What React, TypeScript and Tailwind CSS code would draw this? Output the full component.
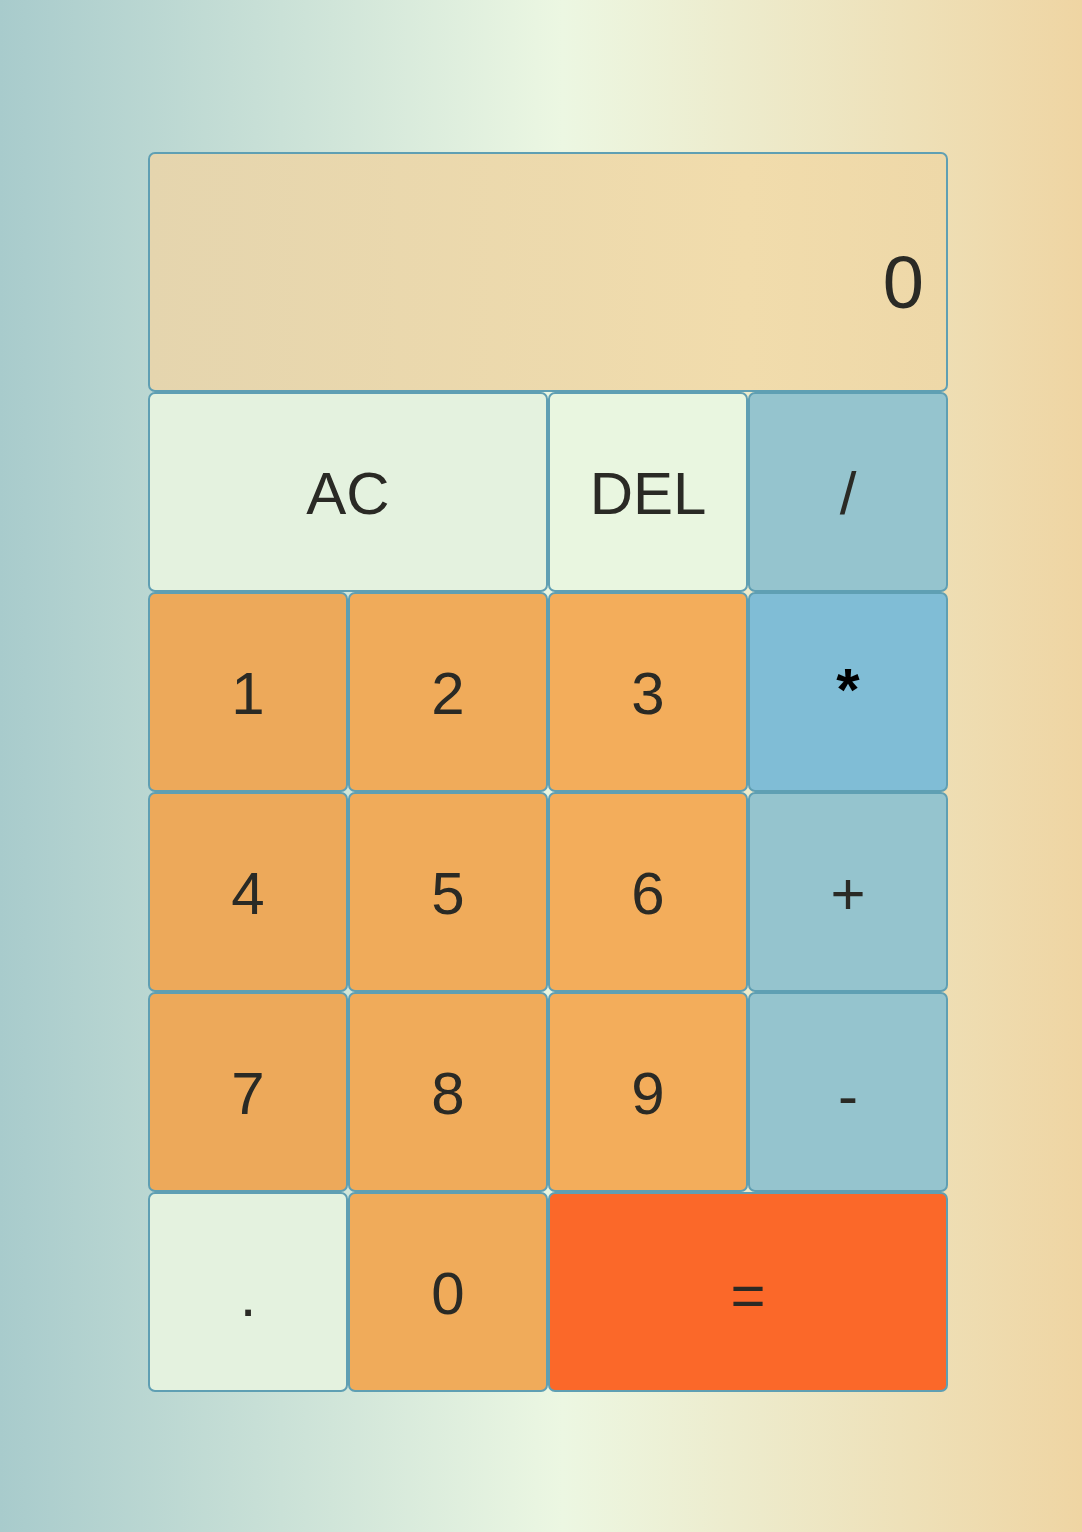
import React from "react"

type Key = { label: string; cls: string; span?: boolean }

const font = { fontFamily: '"Liberation Sans", Arial, sans-serif' }

const keys: Key[] = [
  { label: "AC", cls: "bg-[#e4f2df]", span: true },
  { label: "DEL", cls: "bg-[#e9f6e0]" },
  { label: "/", cls: "bg-[#95c4ce]" },
  { label: "1", cls: "bg-[#eda95a]" },
  { label: "2", cls: "bg-[#f0ab5a]" },
  { label: "3", cls: "bg-[#f3ad5b]" },
  { label: "*", cls: "bg-[#80bdd6] border-[#4f8ea6] text-black font-bold pb-2" },
  { label: "4", cls: "bg-[#eda95a]" },
  { label: "5", cls: "bg-[#f0ab5a]" },
  { label: "6", cls: "bg-[#f3ad5b]" },
  { label: "+", cls: "bg-[#95c4ce]" },
  { label: "7", cls: "bg-[#eda95a]" },
  { label: "8", cls: "bg-[#f0ab5a]" },
  { label: "9", cls: "bg-[#f3ad5b]" },
  { label: "-", cls: "bg-[#95c4ce] pt-2" },
  { label: ".", cls: "bg-[#e4f2df] pt-2" },
  { label: "0", cls: "bg-[#f0ab5a]" },
  { label: "=", cls: "bg-[#fb6829] pt-2" },
]

export default function App() {
  return (
    <div
      className="min-h-[1532px] w-full bg-[linear-gradient(to_right,#a8cbcc_0%,#ecf7e2_52%,#efd5a3_100%)] pt-[152px] pl-[148px]"
      style={font}
    >
      <div className="grid w-[800px] grid-cols-[repeat(4,200px)] grid-rows-[240px_repeat(5,200px)] text-[#2a2a25]">
        {/* Display */}
        <div className="col-span-4 flex items-end justify-end rounded-[7px] border-2 border-[#5f9fb3] bg-[linear-gradient(to_right,#e5d5ae,#f1dcac_75%,#eed8a8)] pr-[22px] pb-[70px]">
          <span className="text-[74px] leading-none">0</span>
        </div>

        {keys.map((k) => (
          <button
            key={k.label}
            className={`flex items-center justify-center rounded-[7px] border-2 border-[#5f9fb3] pt-1 text-[60px] leading-none ${k.cls} ${
              k.label === "AC" || k.label === "=" ? "col-span-2" : ""
            }`}
            style={font}
          >
            {k.label}
          </button>
        ))}
      </div>
    </div>
  )
}
